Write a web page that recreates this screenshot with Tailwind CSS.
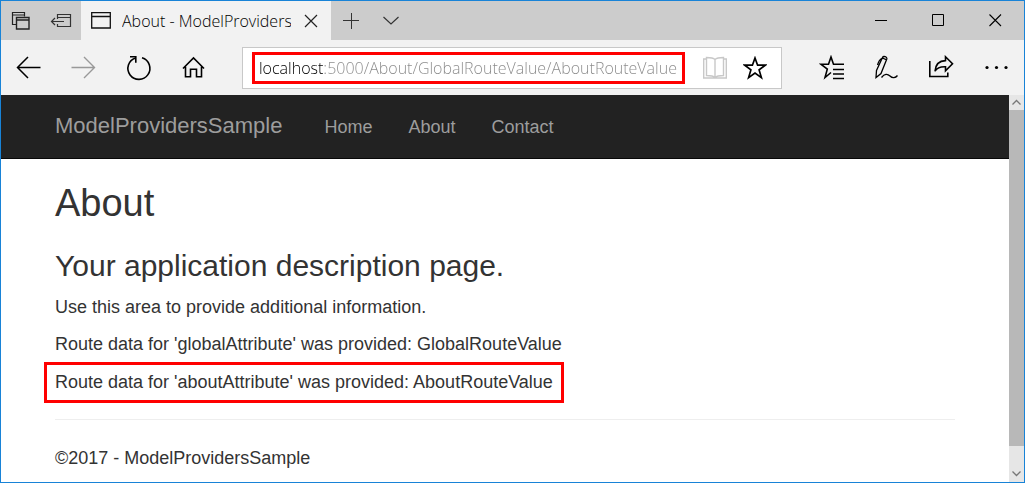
<!DOCTYPE html>
<html lang="en">
<head>
<meta charset="utf-8">
<meta name="viewport" content="width=device-width, initial-scale=1">
<title>About - ModelProvidersSample</title>
<script src="https://cdn.jsdelivr.net/npm/@tailwindcss/browser@4"></script>
</head>
<body class="bg-white">
<div class="flex min-h-screen flex-col border border-[#1883d7] font-['Open_Sans','Noto_Sans',sans-serif] text-black">

  <!-- Tab strip -->
  <header class="flex h-[39px] bg-[#cccccc]">
    <button aria-label="Tabs you've set aside" class="flex w-10 items-center justify-center">
      <svg class="size-5" viewBox="0 0 20 20" fill="none" stroke="#222" stroke-width="1.200"><path d="M5 13.500H1.500V1.500h12v4M1.500 4h12"/><path d="M5.500 6.500h12.500v11.500H5.500zM5.500 9H18" stroke-width="1.400"/></svg>
    </button>
    <button aria-label="Set these tabs aside" class="flex w-10 items-center justify-center">
      <svg class="h-5 w-[22px]" viewBox="0 0 22 20" fill="none" stroke="#333" stroke-width="1.200"><path d="M7.500 8V3.500h13v12h-13V13M7.500 6.500h13M1.500 10.500H14M5 7l-3.500 3.500L5 14"/></svg>
    </button>
    <div class="flex w-[250px] items-center bg-[#f2f2f2] pl-2.5 pr-2">
      <svg class="h-5 w-5 shrink-0" viewBox="0 0 20 20" fill="none" stroke="#111" stroke-width="1.300"><path d="M.7 1.700h18.600v15.300H.7zM.7 5.500h18.600"/></svg>
      <span class="ml-[11px] flex-1 overflow-hidden whitespace-nowrap text-base font-light leading-6">About - ModelProvidersSample</span>
      <button aria-label="Close tab" class="ml-2 flex size-6 items-center justify-center">
        <svg class="size-[14px]" viewBox="0 0 14 14" fill="none" stroke="#222" stroke-width="1.200"><path d="M1 1l12 12M13 1L1 13"/></svg>
      </button>
    </div>
    <button aria-label="New tab" class="flex w-10 items-center justify-center">
      <svg class="size-4" viewBox="0 0 16 16" fill="none" stroke="#333"><path d="M8.500 0v16M0 7.500h16"/></svg>
    </button>
    <button aria-label="Tab previews" class="flex w-10 items-center justify-center">
      <svg class="size-4" viewBox="0 0 16 16" fill="none" stroke="#333" stroke-width="1.200"><path d="M.5 4L8 11l7.500-7"/></svg>
    </button>
    <div class="flex-1"></div>
    <button aria-label="Minimize" class="flex w-[57px] items-center justify-center">
      <svg class="size-[13px]" viewBox="0 0 13 13" stroke="#000"><path d="M0 6.500h12"/></svg>
    </button>
    <button aria-label="Maximize" class="flex w-[57px] items-center justify-center">
      <svg class="size-[13px]" viewBox="0 0 13 13" fill="none" stroke="#000"><path d="M.5 .5h11v11H.5z"/></svg>
    </button>
    <button aria-label="Close" class="flex w-[57px] items-center justify-center">
      <svg class="size-[13px]" viewBox="0 0 13 13" fill="none" stroke="#000" stroke-width="1.100"><path d="M.5 .5L12 12M12 .5L.5 12"/></svg>
    </button>
  </header>

  <!-- Toolbar -->
  <div class="flex h-[55px] items-center bg-[#f2f2f2]">
    <button aria-label="Back" class="flex h-full w-[55px] items-center justify-center">
      <svg class="size-[23px] overflow-visible" viewBox="0 0 23 23" fill="none" stroke="#000" stroke-width="1.500"><path d="M23.500 11.500H.500M11 1L.500 11.500 11 22"/></svg>
    </button>
    <button aria-label="Forward" disabled class="flex h-full w-[55px] items-center justify-center">
      <svg class="size-[23px] overflow-visible" viewBox="0 0 23 23" fill="none" stroke="#999" stroke-width="1.400"><path d="M-.5 11.500h23M12 1l10.500 10.500L12 22"/></svg>
    </button>
    <button aria-label="Refresh" class="flex h-full w-[55px] items-center justify-center">
      <svg class="size-[23px] overflow-visible" viewBox="0 0 23 23" fill="none" stroke="#000" stroke-width="1.600"><path d="M8.500 1.900A11 11 0 1 0 15 1.800"/><path d="M3 .8h5.800v6"/></svg>
    </button>
    <button aria-label="Home" class="flex h-full w-[55px] items-center justify-center">
      <svg class="size-[23px] overflow-visible" viewBox="0 0 23 23" fill="none" stroke="#000" stroke-width="1.600"><path d="M1 12.500L11.500 2 22 12.500M3.500 10.800v9.900h5v-7.500h6v7.500h5V10.800"/></svg>
    </button>
    <div class="ml-[21px] mr-[22px] flex h-[42px] flex-1 items-center border border-[#c8c8c8] bg-white pl-3">
      <input type="text" aria-label="Address" spellcheck="false" value="localhost:5000/About/GlobalRouteValue/AboutRouteValue" class="mr-[3px] h-[26px] min-w-0 flex-1 border-0 bg-linear-to-r from-black from-[68px] to-[#888888] to-[68px] bg-clip-text px-1 text-base font-light text-transparent outline-3 outline-[#ff0000]">
      <button aria-label="Reading view" disabled class="ml-2.5 flex w-10 items-center justify-center">
        <svg class="size-6" viewBox="0 0 24 24" fill="none" stroke="#c8c8c8" stroke-width="1.400"><path d="M12 3.500C10 1.500 6 1.500 3.500 1.500v18c3 0 6.500 0 8.500 2 2-2 5.500-2 8.500-2v-18C18 1.500 14 1.500 12 3.500zM12 3.500v18M3.500 3H.7v19h22.600V3h-2.800"/></svg>
      </button>
      <button aria-label="Add to favorites" class="mr-1.5 flex w-10 items-center justify-center">
        <svg class="size-6" viewBox="0 0 24 24" fill="none" stroke="#000" stroke-width="1.700"><path d="M12 2l2.600 7.200h7.600l-6.100 4.700 2.300 7.700L12 17.100l-6.400 4.500 2.300-7.700-6.100-4.700h7.600z"/></svg>
      </button>
    </div>
    <button aria-label="Hub" class="flex h-full w-[55px] items-center justify-center">
      <svg class="size-[25px]" viewBox="0 0 25 25" fill="none" stroke="#000" stroke-width="1.600"><path d="M12 17.500L6 22.500l2.300-8.400-6.500-4.900h7.700L12 2l2.500 7.200H25M14 14.500h11M14 19h11M14 23.500h11"/></svg>
    </button>
    <button aria-label="Make a web note" class="flex h-full w-[55px] items-center justify-center">
      <svg class="size-[23px] overflow-visible" viewBox="0 0 23 23" fill="none" stroke="#000" stroke-width="1.300"><path d="M1 21.500l.5-7L7.500 1.500c.8-1.800 5-.8 4.300 1.500L6 17.500zM7.300 2l4.500 1.800M6.500 2.500C4.500 3.500 3.500 6 2.500 9M6.500 21.500c3-4 6-4 8.500-1.500s5.500 2 7.500-.5"/></svg>
    </button>
    <button aria-label="Share" class="flex h-full w-[55px] items-center justify-center">
      <svg class="size-[25px]" viewBox="0 0 25 25" fill="none" stroke="#000" stroke-width="1.600"><path d="M.8 6v15.500h18V17.500M16.500 1.800l7 6.900-7 7v-4c-4.500-.2-8.500 1-10.500 4.500.5-6.500 4.500-10.400 10.500-10.600z"/></svg>
    </button>
    <button aria-label="More" class="flex h-full w-[55px] items-center justify-center">
      <svg class="size-[23px]" viewBox="0 0 23 23"><circle cx="2" cy="11.500" r="1.600"/><circle cx="11.500" cy="11.500" r="1.600"/><circle cx="21" cy="11.500" r="1.600"/></svg>
    </button>
  </div>

  <!-- Page viewport -->
  <div class="flex flex-1 font-['Liberation_Sans',Arial,sans-serif] text-[#333333]">
    <div class="min-w-0 flex-1 bg-white">
      <nav class="border-b border-[#080808] bg-[#222222]">
        <div class="mx-auto flex h-[63px] max-w-[900px] items-center text-lg text-[#9d9d9d]">
          <a href="#" class="mr-6 text-[22px]">ModelProvidersSample</a>
          <a href="#" class="px-[18px]">Home</a>
          <a href="#" class="px-[18px]">About</a>
          <a href="#" class="px-[18px]">Contact</a>
        </div>
      </nav>
      <main class="mx-auto max-w-[900px] text-lg leading-[26px]">
        <h1 class="pt-[23px] text-[38px] leading-[42px]">About</h1>
        <h2 class="mt-[24px] text-[30px] leading-[36px]">Your application description page.</h2>
        <p class="mt-[10px]">Use this area to provide additional information.</p>
        <p class="mt-[11px]">Route data for 'globalAttribute' was provided: GlobalRouteValue</p>
        <p class="-ml-[11px] mt-[5px] w-fit border-3 border-[#ff0000] px-2 pb-[5px] pt-[4px]">Route data for 'aboutAttribute' was provided: AboutRouteValue</p>
        <hr class="mt-4 border-[#eeeeee]">
        <footer class="pt-[25px]">©2017 - ModelProvidersSample</footer>
      </main>
    </div>
    <div class="flex w-[15px] flex-col bg-[#e6e6e6]" aria-hidden="true">
      <svg class="h-[15px] w-[15px]" viewBox="0 0 15 15" fill="none" stroke="#777" stroke-width="1.300"><path d="M3.500 9.500l4-4 4 4"/></svg>
      <div class="flex-1"><div class="h-[94%] bg-[#b8b8b8]"></div></div>
      <svg class="h-[15px] w-[15px]" viewBox="0 0 15 15" fill="none" stroke="#777" stroke-width="1.300"><path d="M3.500 4.500l4 4 4-4"/></svg>
    </div>
  </div>
</div>
</body>
</html>
